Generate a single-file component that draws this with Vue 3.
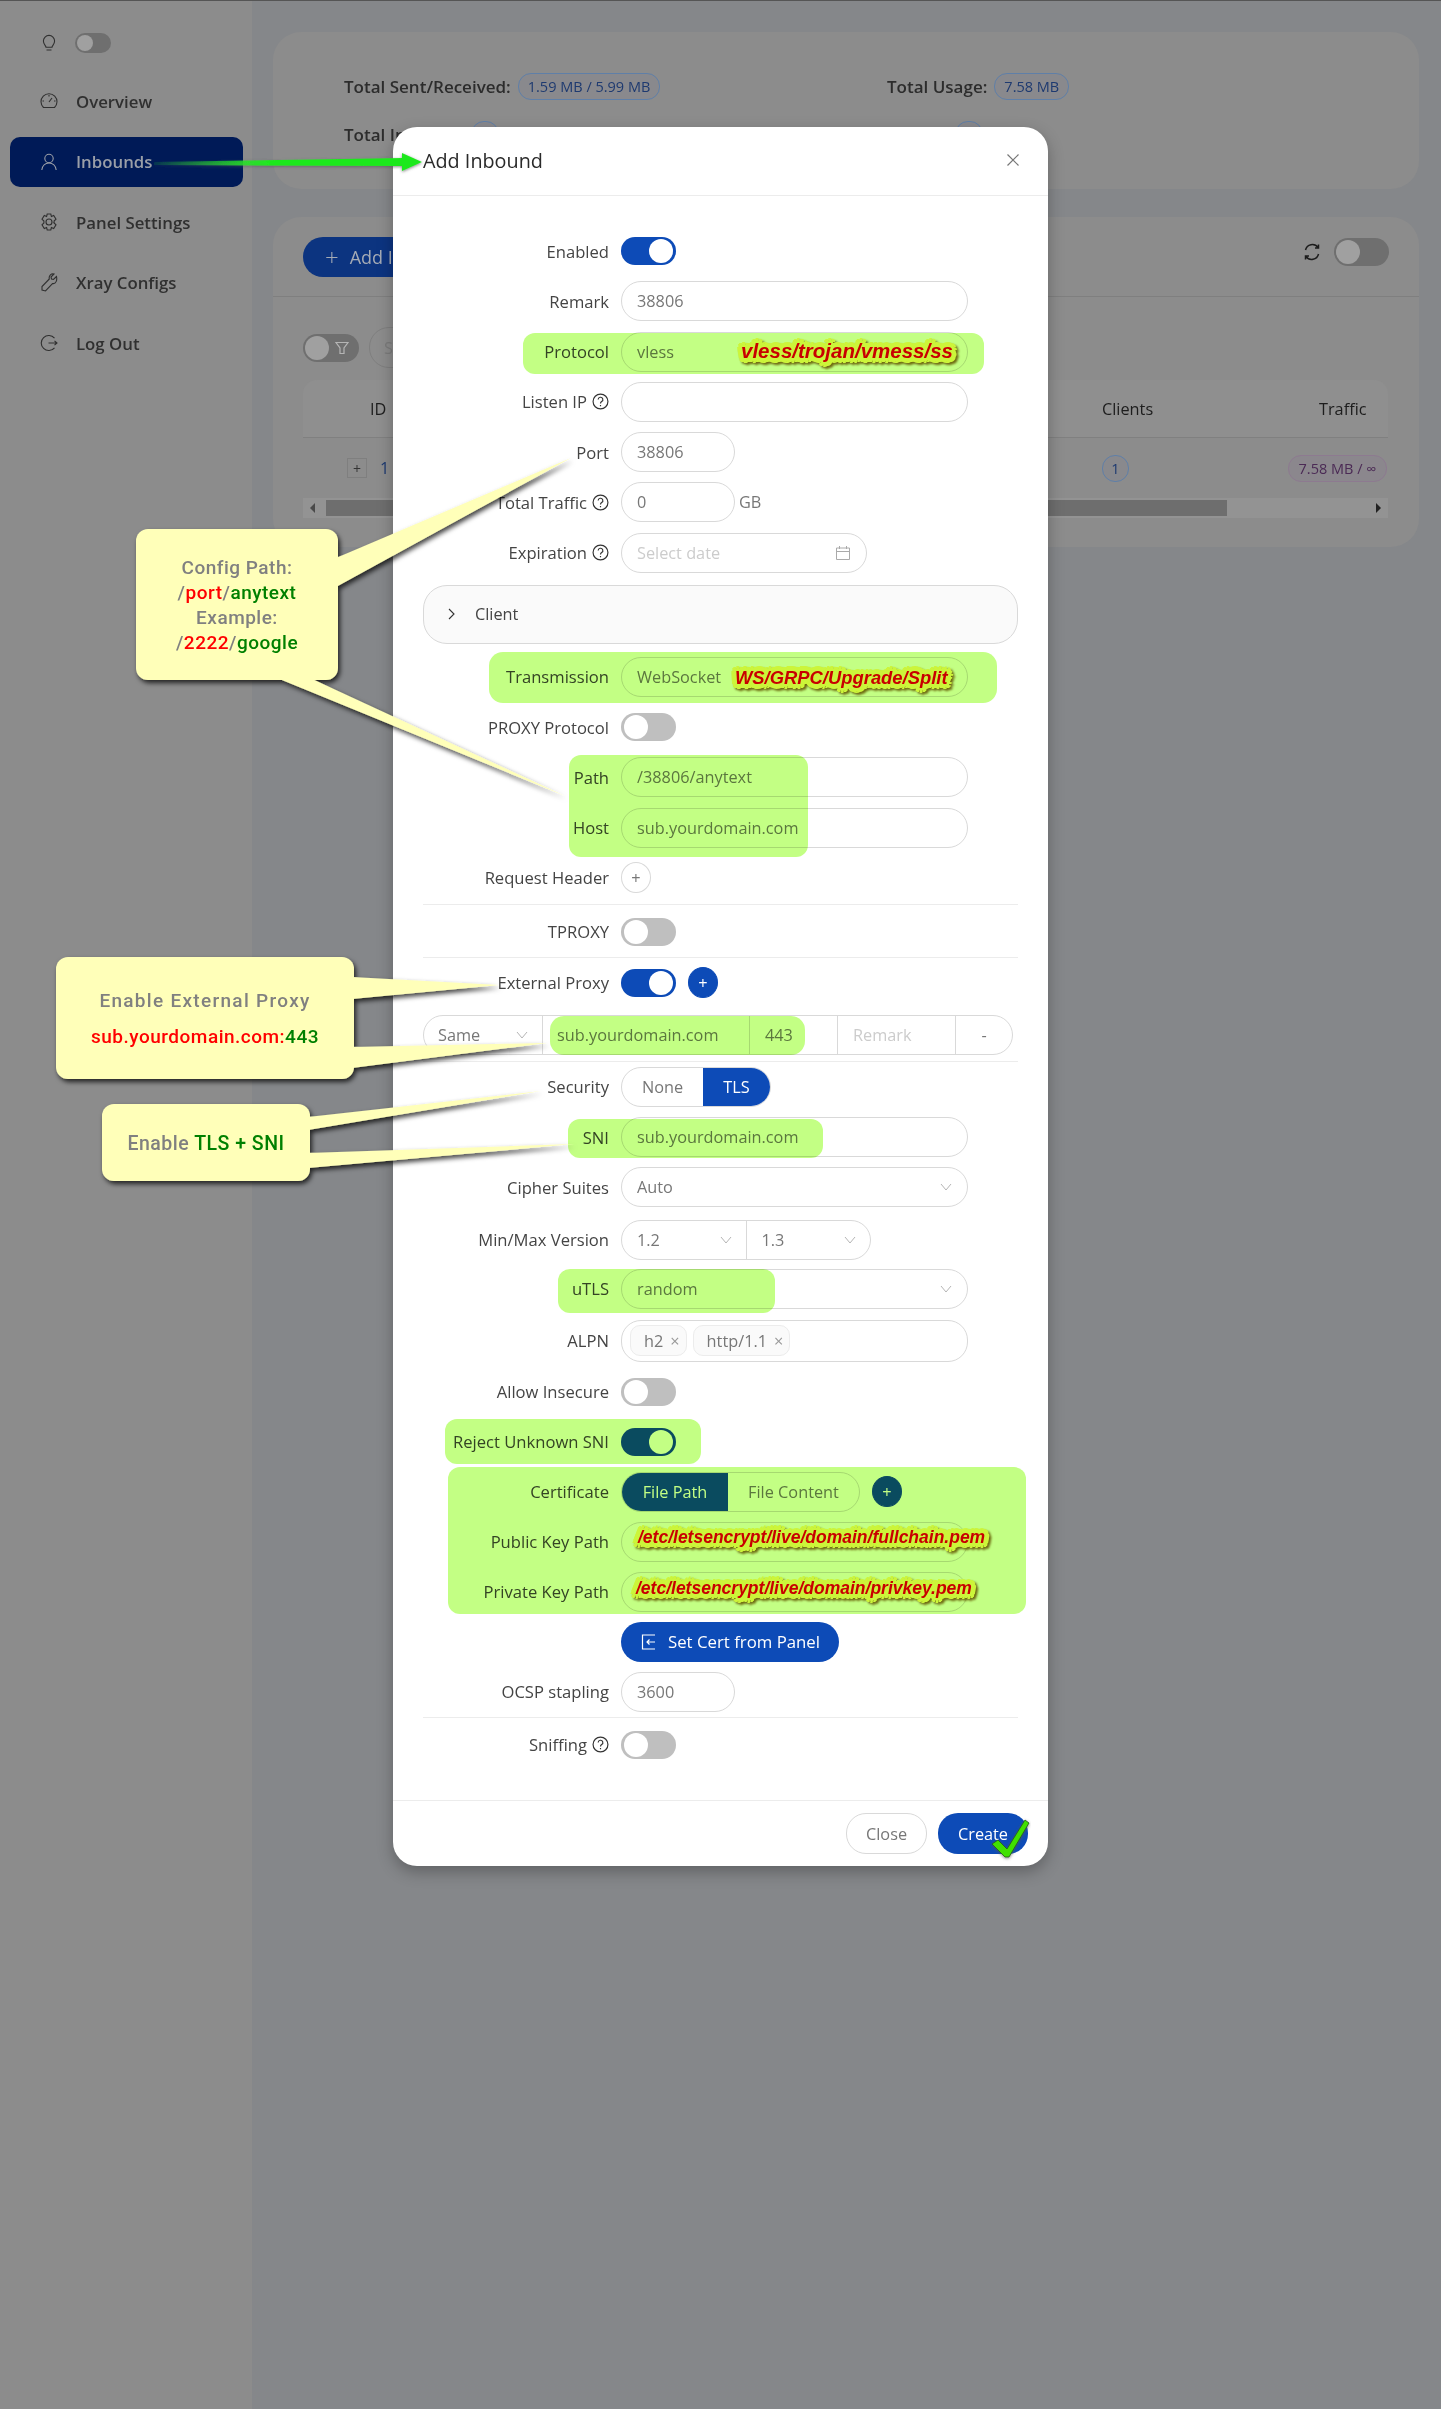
<script setup>
const navItems = [
  { key: "overview", label: "Overview" },
  { key: "inbounds", label: "Inbounds", active: true },
  { key: "settings", label: "Panel Settings" },
  { key: "xray", label: "Xray Configs" },
  { key: "logout", label: "Log Out" },
];

// green marker boxes painted on top of the form: [x, y, w, h, radius]
const marks = [
  [523, 332, 461, 41, 12],
  [489, 651, 508, 51, 14],
  [569, 754, 239, 102, 12],
  [550, 1015, 255, 39, 14],
  [568, 1118, 255, 39, 12],
  [558, 1268, 217, 44, 12],
  [445, 1418, 256, 45, 12],
  [448, 1466, 578, 147, 12],
];

const notes = [
  { text: "vless/trojan/vmess/ss", x: 741, y: 350, size: 20.5 },
  { text: "WS/GRPC/Upgrade/Split", x: 735, y: 677, size: 18.4 },
  { text: "/etc/letsencrypt/live/domain/fullchain.pem", x: 638, y: 1536, size: 17.5 },
  { text: "/etc/letsencrypt/live/domain/privkey.pem", x: 636, y: 1587, size: 17.5 },
];

function boxStyle(m) {
  return {
    left: m[0] + "px",
    top: m[1] + "px",
    width: m[2] + "px",
    height: m[3] + "px",
    borderRadius: m[4] + "px",
  };
}
</script>

<template>
  <div class="page">
    <aside class="side">
      <div class="themeRow">
        <svg class="navIcon" viewBox="0 0 20 20"><path d="M7 14.2c0-1.6-2.6-2.6-2.6-6.2a5.6 5.6 0 0 1 11.2 0c0 3.6-2.6 4.6-2.6 6.2zM7.5 17h5" /></svg>
        <span class="dimSwitch small"><i></i></span>
      </div>
      <nav class="nav">
        <a v-for="item in navItems" :key="item.key" class="navItem" :class="{ active: item.active }">
          <svg class="navIcon" viewBox="0 0 20 20">
            <template v-if="item.key === 'overview'">
              <path d="M4.5 16.5a8 8 0 1 1 11 0zM10 11l3-4M3.5 10h1.5M15 10h1.5M10 4v1.5" />
            </template>
            <template v-else-if="item.key === 'inbounds'">
              <circle cx="10" cy="6.5" r="4.2" /><path d="M2.8 18c.5-4 3.400-7 7.200-7s6.700 3 7.200 7" />
            </template>
            <template v-else-if="item.key === 'settings'">
              <circle cx="10" cy="10" r="3" /><path d="M8.200 2h3.600l.6 2.500 2.300-1 2.300 3.700-1.900 1.800.1 2-.1 0 1.900 1.800-2.300 3.700-2.300-1-.6 2.500H8.200l-.6-2.500-2.300 1-2.300-3.700L4.900 11V9L3 7.200l2.300-3.700 2.300 1z" />
            </template>
            <template v-else-if="item.key === 'xray'">
              <path d="M17.500 3.500l-3 3-2-.5-.5-2 3-3c-2.500-.8-5.500 1.500-4.700 5L3 13.500V17l3.500 1 7-7.500c3.500.8 4.800-3.500 4-7z" />
            </template>
            <template v-else>
              <path d="M15.500 5.200a7.500 7.500 0 1 0 0 9.600M9.500 10h8.500M15.500 7.800L18 10l-2.500 2.200" />
            </template>
          </svg>
          <span>{{ item.label }}</span>
        </a>
      </nav>
    </aside>

    <main class="main">
      <section class="card statsCard">
        <div class="stat"><b>Total Sent/Received:</b><span class="tag">1.59 MB / 5.99 MB</span></div>
        <div class="stat"><b>Total Usage:</b><span class="tag">7.58 MB</span></div>
        <div class="stat"><b>Total Inbound:</b><span class="tag">1</span></div>
        <div class="stat"><b>Clients:</b><span class="tag">1</span></div>
      </section>

      <section class="card listCard">
        <div class="listHead">
          <button class="addBtn"><span class="addPlus">+</span>Add Inbound</button>
          <div class="refresh">
            <svg width="20" height="20" viewBox="0 0 20 20" fill="none" stroke="#1c1c1c" stroke-width="1.5"><path d="M3.500 8a7 7 0 0 1 12.500-2.500M16.500 12a7 7 0 0 1-12.500 2.500M16.500 2.500v3.500H13M3.500 17.500V14H7" /></svg>
            <span class="dimSwitch"><i></i></span>
          </div>
        </div>
        <div class="listBody">
          <div class="filters">
            <span class="dimSwitch filterSwitch"><i></i>
              <svg width="16" height="16" viewBox="0 0 16 16" fill="none" stroke="#b5b5b5" stroke-width="1.200"><path d="M2 2.500h12l-4 5.500v5.500H6V8z" /></svg>
            </span>
            <span class="searchBox">S</span>
          </div>
          <div class="tableHead"><span></span><span>ID</span><span>Clients</span><span>Traffic</span></div>
          <div class="tableRow">
            <span></span><span class="expand">+</span><span class="rowId">1</span>
            <span class="tag round">1</span><span class="tag mauve">7.58 MB / ∞</span>
          </div>
          <div class="scrollbar">
            <span class="arrowL"></span><span class="thumb"></span><span class="arrowR"></span>
          </div>
        </div>
      </section>
    </main>

    <section class="modal">
      <header class="modalHead">
        <span>Add Inbound</span>
        <svg width="14" height="14" viewBox="0 0 14 14" stroke="#777" stroke-width="1.200"><path d="M1.500 1.500l11 11M12.500 1.500l-11 11" /></svg>
      </header>

      <div class="modalBody">
        <div class="row"><label>Enabled</label><span class="switch on"><i></i></span></div>
        <div class="row"><label>Remark</label><input class="in" value="38806" /></div>
        <div class="row"><label>Protocol</label><div class="in">vless</div></div>
        <div class="row">
          <label>Listen IP
            <svg class="help" viewBox="0 0 16 16"><circle cx="8" cy="8" r="7" /><path d="M5.800 6.200a2.200 2.200 0 1 1 3.300 1.900c-.8.500-1.100.9-1.100 1.800M8 11.200v1.300" /></svg>
          </label>
          <input class="in" />
        </div>
        <div class="row"><label>Port</label><input class="in short" value="38806" /></div>
        <div class="row">
          <label>Total Traffic
            <svg class="help" viewBox="0 0 16 16"><circle cx="8" cy="8" r="7" /><path d="M5.800 6.200a2.200 2.200 0 1 1 3.300 1.900c-.8.500-1.100.9-1.100 1.800M8 11.200v1.300" /></svg>
          </label>
          <div class="inline"><input class="in short" value="0" /><span class="unit">GB</span></div>
        </div>
        <div class="row">
          <label>Expiration
            <svg class="help" viewBox="0 0 16 16"><circle cx="8" cy="8" r="7" /><path d="M5.800 6.200a2.200 2.200 0 1 1 3.300 1.900c-.8.500-1.100.9-1.100 1.800M8 11.200v1.300" /></svg>
          </label>
          <div class="in date">
            <span class="ph">Select date</span>
            <svg width="16" height="16" viewBox="0 0 16 16" fill="none" stroke="#aaa"><path d="M1.500 3h13v11.500h-13zM1.500 6.500h13M4.500 1v3M11.500 1v3" /></svg>
          </div>
        </div>

        <div class="client">
          <svg width="10" height="14" viewBox="0 0 10 14" fill="none" stroke="#333" stroke-width="1.100"><path d="M2 2l5 5-5 5" /></svg>
          <span>Client</span>
        </div>

        <div class="row"><label>Transmission</label><div class="in">WebSocket</div></div>
        <div class="row"><label>PROXY Protocol</label><span class="switch"><i></i></span></div>
        <div class="row"><label>Path</label><input class="in" value="/38806/anytext" /></div>
        <div class="row"><label>Host</label><input class="in" value="sub.yourdomain.com" /></div>
        <div class="row last"><label>Request Header</label><button class="circle">+</button></div>
        <hr class="rule first" />
        <div class="row last"><label>TPROXY</label><span class="switch"><i></i></span></div>
        <hr class="rule" />
        <div class="row last"><label>External Proxy</label>
          <div class="inline gapped"><span class="switch on"><i></i></span><button class="circle blue">+</button></div>
        </div>
        <div class="proxyRow">
          <div class="seg same">Same
            <svg class="chev" viewBox="0 0 12 8"><path d="M1 1l5 6 5-6" /></svg>
          </div>
          <div class="seg host">sub.yourdomain.com</div>
          <div class="seg port">443</div>
          <div class="seg remark">Remark</div>
          <div class="seg minus">-</div>
        </div>
        <hr class="rule tight" />
        <div class="row"><label>Security</label>
          <div class="radio"><span class="opt none">None</span><span class="opt sel tls">TLS</span></div>
        </div>
        <div class="row"><label>SNI</label><input class="in" value="sub.yourdomain.com" /></div>
        <div class="row"><label>Cipher Suites</label>
          <div class="in pick">Auto<svg class="chev" viewBox="0 0 12 8"><path d="M1 1l5 6 5-6" /></svg></div>
        </div>
        <div class="row versions"><label>Min/Max Version</label>
          <div class="verPair">
            <div class="ver">1.2<svg class="chev" viewBox="0 0 12 8"><path d="M1 1l5 6 5-6" /></svg></div>
            <div class="ver">1.3<svg class="chev" viewBox="0 0 12 8"><path d="M1 1l5 6 5-6" /></svg></div>
          </div>
        </div>
        <div class="row"><label>uTLS</label>
          <div class="in pick">random<svg class="chev" viewBox="0 0 12 8"><path d="M1 1l5 6 5-6" /></svg></div>
        </div>
        <div class="row alpnRow"><label>ALPN</label>
          <div class="in alpn">
            <span class="chip">h2<em>×</em></span><span class="chip">http/1.1<em>×</em></span>
          </div>
        </div>
        <div class="row even"><label>Allow Insecure</label><span class="switch"><i></i></span></div>
        <div class="row even"><label>Reject Unknown SNI</label><span class="switch on"><i></i></span></div>
        <div class="row even"><label>Certificate</label>
          <div class="inline gapped">
            <div class="radio"><span class="opt sel path">File Path</span><span class="opt content">File Content</span></div>
            <button class="circle blue">+</button>
          </div>
        </div>
        <div class="row even"><label>Public Key Path</label><input class="in" /></div>
        <div class="row even"><label>Private Key Path</label><input class="in" /></div>
        <div class="row even"><label></label>
          <button class="primary cert">
            <svg width="18" height="18" viewBox="0 0 18 18" fill="none" stroke="#fff" stroke-width="1.200"><path d="M15 2H2.500v14H15M15 9H7M9.500 6.500L7 9l2.500 2.500" /></svg>
            Set Cert from Panel
          </button>
        </div>
        <div class="row last"><label>OCSP stapling</label><input class="in short" value="3600" /></div>
        <hr class="rule tail" />
        <div class="row">
          <label>Sniffing
            <svg class="help" viewBox="0 0 16 16"><circle cx="8" cy="8" r="7" /><path d="M5.800 6.200a2.200 2.200 0 1 1 3.300 1.900c-.8.500-1.100.9-1.100 1.800M8 11.200v1.300" /></svg>
          </label>
          <span class="switch"><i></i></span>
        </div>
      </div>

      <footer class="modalFoot">
        <button class="ghost">Close</button>
        <button class="primary create">Create</button>
      </footer>
    </section>

    <!-- annotations painted on the screenshot -->
    <div v-for="(m, i) in marks" :key="i" class="mark" :style="boxStyle(m)"></div>
    <span v-for="n in notes" :key="n.text" class="note" :style="{ left: n.x + 'px', top: n.y + 'px', fontSize: n.size + 'px' }">{{ n.text }}</span>

    <svg class="overlay" width="1441" height="2409" viewBox="0 0 1441 2409">
      <defs>
        <filter id="soft" x="-20%" y="-20%" width="140%" height="140%">
          <feDropShadow dx="2" dy="3" stdDeviation="2.500" flood-color="#000" flood-opacity=".75" />
        </filter>
        <filter id="arrowSoft" x="-5%" y="-100%" width="110%" height="300%">
          <feDropShadow dx="0" dy="1" stdDeviation="1.500" flood-color="#555" flood-opacity=".7" />
        </filter>
        <linearGradient id="arrowFill" x1="154" x2="270" y1="0" y2="0" gradientUnits="userSpaceOnUse">
          <stop offset="0" stop-color="#1ee81e" stop-opacity="0.100" />
          <stop offset="1" stop-color="#1ee81e" />
        </linearGradient>
      </defs>

      <g fill="#ffffb9" filter="url(#soft)">
        <rect x="136" y="528" width="202" height="151" rx="12" />
        <polygon points="336,557 571,457 336,586" />
        <polygon points="277,677 565,795 310,677" />
        <rect x="56" y="956" width="298" height="122" rx="12" />
        <polygon points="352,976 499,984 352,998" />
        <polygon points="352,1046 547,1042 352,1067" />
        <rect x="102" y="1103" width="208" height="77" rx="12" />
        <polygon points="308,1116 541,1090 308,1129" />
        <polygon points="308,1152 574,1143 308,1167" />
      </g>

      <path filter="url(#arrowSoft)" fill="url(#arrowFill)" d="M154 161 L402 157 V152 L422 161 L402 170 V165 L154 164 Z" />

      <path filter="url(#arrowSoft)" fill="#3fe000" stroke="#1f5c10" stroke-width=".8" d="M992 1843 L998 1839 L1007 1848 L1025 1819 L1029 1822 L1009 1856 L1005 1856 Z" />
    </svg>

    <div class="callText c1">
      <div>Config Path:</div>
      <div>/<span class="r">port</span>/<span class="g">anytext</span></div>
      <div>Example:</div>
      <div>/<span class="r">2222</span>/<span class="g">google</span></div>
    </div>
    <div class="callText c2">
      <div class="c2a">Enable External Proxy</div>
      <div class="c2b"><span class="r">sub.yourdomain.com:</span><span class="g">443</span></div>
    </div>
    <div class="callText c3">Enable <span class="g">TLS + SNI</span></div>
  </div>
</template>

<style>
body {
  margin: 0;
  background: #85878a;
}
</style>

<style scoped>
* {
  box-sizing: border-box;
}
.page {
  position: relative;
  display: flex;
  width: 1441px;
  height: 2409px;
  overflow: hidden;
  background: #85878a;
  border-top: 1px solid #555;
  font-family: "Open Sans", "Noto Sans", sans-serif;
  font-size: 16.300px;
  color: #444;
}

/* sidebar */
.side {
  width: 252px;
  flex: none;
  background: #8c8c8c;
  padding: 32px 9px 0 10px;
}
.themeRow {
  display: flex;
  align-items: center;
  gap: 16px;
  padding-left: 29px;
  height: 20px;
}
.navIcon {
  width: 20px;
  height: 20px;
  fill: none;
  stroke: #303030;
  stroke-width: 1.100;
  flex: none;
}
.nav {
  display: flex;
  flex-direction: column;
  margin-top: 23px;
}
.navItem {
  display: flex;
  align-items: center;
  gap: 17px;
  height: 50px;
  margin-bottom: 10.500px;
  padding-left: 29px;
  border-radius: 10px;
  font-weight: 600;
  font-size: 16.800px;
  color: #303030;
}
.navItem.active {
  background: #001a57;
  color: #9a9fa8;
}
.navItem.active .navIcon {
  stroke: #9a9fa8;
}
.dimSwitch {
  display: inline-flex;
  align-items: center;
  width: 55px;
  height: 28px;
  padding: 2px;
  border-radius: 14px;
  background: #6f6f6f;
}
.dimSwitch i {
  width: 24px;
  height: 24px;
  border-radius: 50%;
  background: #a0a0a0;
}
.dimSwitch.small {
  width: 36px;
  height: 20px;
}
.dimSwitch.small i {
  width: 16px;
  height: 16px;
}

/* page behind the modal */
.main {
  flex: 1;
  padding: 31px 22px 0 21px;
}
.card {
  background: #8c8c8c;
  border-radius: 28px;
}
.statsCard {
  display: grid;
  grid-template-columns: 543px 1fr;
  grid-auto-rows: 48px;
  height: 157px;
  padding: 30px 0 0 71px;
}
.stat {
  display: flex;
  align-items: center;
  gap: 7px;
}
.stat b {
  font-weight: 600;
  font-size: 17px;
  color: #2c2c2c;
}
.tag {
  display: inline-flex;
  align-items: center;
  justify-content: center;
  height: 27px;
  padding: 0 9px;
  border: 1px solid #5f7fa8;
  border-radius: 13px;
  background: #89898d;
  font-size: 14.500px;
  color: #1e3a70;
}
.listCard {
  height: 330px;
  margin-top: 28px;
}
.listHead {
  display: flex;
  align-items: center;
  justify-content: space-between;
  height: 80px;
  padding: 0 30px;
  border-bottom: 1px solid #7f7f7f;
}
.addBtn {
  display: flex;
  align-items: center;
  height: 40px;
  padding: 0 22px;
  border: none;
  border-radius: 20px;
  background: #0c3480;
  font: inherit;
  font-size: 18px;
  color: #a5abb5;
}
.addPlus {
  margin-right: 11px;
  font-size: 24px;
  font-weight: 300;
}
.refresh {
  display: flex;
  align-items: center;
  gap: 12px;
  margin-top: -10px;
}
.listBody {
  padding: 30px 31px 0 30px;
}
.filters {
  display: flex;
  align-items: center;
  gap: 10px;
  height: 41px;
}
.filterSwitch {
  width: 56px;
  gap: 5px;
}
.searchBox {
  display: flex;
  align-items: center;
  width: 120px;
  height: 41px;
  padding-left: 14px;
  border: 1px solid #7f7f7f;
  border-radius: 20px;
  color: #7b7b7b;
}
.tableHead {
  display: grid;
  grid-template-columns: 67px 732px 217px 1fr;
  align-items: center;
  height: 58px;
  margin-top: 12px;
  border-bottom: 1px solid #808080;
  background: #8f8f8f;
  border-radius: 14px 14px 0 0;
  color: #1d1d1d;
}
.tableRow {
  display: grid;
  grid-template-columns: 44px 33px 722px 186px 1fr;
  align-items: center;
  height: 60px;
}
.expand {
  display: flex;
  align-items: center;
  justify-content: center;
  width: 20px;
  height: 20px;
  border: 1px solid #7f7f7f;
  font-size: 14px;
  color: #333;
}
.rowId {
  color: #1e3a70;
}
.tag.round {
  width: 27px;
  padding: 0;
}
.tag.mauve {
  width: 99px;
  padding: 0;
  border-color: #8d7a90;
  background: #8b878d;
  color: #4b2a55;
}
.scrollbar {
  display: flex;
  align-items: center;
  height: 20px;
  background: #939393;
}
.thumb {
  width: 901px;
  height: 16px;
  margin-left: 11px;
  background: #6e6e6e;
}
.arrowL,
.arrowR {
  width: 0;
  height: 0;
  border-top: 5px solid transparent;
  border-bottom: 5px solid transparent;
}
.arrowL {
  margin-left: 7px;
  border-right: 5px solid #4a4a4a;
}
.arrowR {
  margin-left: auto;
  margin-right: 7px;
  border-left: 5px solid #222;
}

/* modal */
.modal {
  position: absolute;
  left: 393px;
  top: 126px;
  display: flex;
  flex-direction: column;
  width: 655px;
  height: 1739px;
  background: #fff;
  border-radius: 24px;
  box-shadow: 0 6px 16px rgba(0, 0, 0, 0.28);
}
.modalHead {
  display: flex;
  align-items: center;
  justify-content: space-between;
  height: 69px;
  padding: 0 28px 2px 30px;
  border-bottom: 1px solid #ececec;
  font-size: 19.800px;
  color: #2a2a2a;
}
.modalBody {
  display: flex;
  flex-direction: column;
  flex: 1;
  padding: 35px 30px 0;
}
.row {
  display: grid;
  flex: none;
  grid-template-columns: 198px 347px;
  align-items: center;
  height: 40px;
  margin-bottom: 10.250px;
}
.row.last {
  margin-bottom: 0;
}
.row.even {
  margin-bottom: 10px;
}
.row.versions {
  margin-top: 2px;
  margin-bottom: 9px;
}
.row.alpnRow {
  height: 42px;
  margin-top: 1px;
  margin-bottom: 10px;
}
.row label {
  display: flex;
  align-items: center;
  justify-content: flex-end;
  gap: 5px;
  padding-right: 12px;
  font-size: 16.600px;
  white-space: nowrap;
}
.help {
  width: 17px;
  height: 17px;
  fill: none;
  stroke: #333;
  stroke-width: 1.100;
}
.in {
  display: flex;
  align-items: center;
  width: 100%;
  height: 40px;
  padding: 0 15px;
  border: 1px solid #d9d9d9;
  border-radius: 20px;
  outline: none;
  background: transparent;
  font: inherit;
  color: #777;
}
.in.short {
  width: 114px;
}
.in.date {
  justify-content: space-between;
  width: 246px;
}
.in.pick {
  justify-content: space-between;
}
.ph {
  color: #ccc;
}
.inline {
  display: flex;
  align-items: center;
  gap: 4px;
}
.inline.gapped {
  gap: 12px;
}
.unit {
  color: #777;
}
.client {
  display: flex;
  flex: none;
  align-items: center;
  gap: 18px;
  height: 59px;
  margin: 2px 0 13px;
  padding-left: 23px;
  border: 1px solid #d9d9d9;
  border-radius: 24px;
  background: #fafafa;
}
.rule {
  flex: none;
  width: 100%;
  height: 1px;
  margin: 5px 0;
  border: none;
  background: #ececec;
}
.rule.first {
  margin: 6px 0 7px;
}
.rule.tight {
  margin: 6px 0 5px;
}
.rule.tail {
  margin: 5px 0 7px;
}
.switch {
  display: inline-flex;
  align-items: center;
  justify-self: start;
  width: 55px;
  height: 28px;
  padding: 2px 3px;
  border-radius: 14px;
  background: #bfbfbf;
}
.switch i {
  width: 24px;
  height: 24px;
  border-radius: 50%;
  background: #fff;
}
.switch.on {
  justify-content: flex-end;
  background: #0d4bb7;
}
.circle {
  width: 30px;
  height: 31px;
  padding: 0;
  border: 1px solid #d9d9d9;
  border-radius: 50%;
  background: #fff;
  font: inherit;
  color: #777;
}
.circle.blue {
  border-color: #0d4bb7;
  background: #0d4bb7;
  color: #fff;
}
.proxyRow {
  display: flex;
  flex: none;
  width: 590px;
  height: 40px;
  margin-top: 12px;
  border: 1px solid #d9d9d9;
  border-radius: 20px;
}
.seg {
  display: flex;
  align-items: center;
  border-right: 1px solid #d9d9d9;
  color: #777;
}
.seg.same {
  justify-content: space-between;
  width: 119px;
  padding: 0 14px;
}
.seg.host {
  width: 207px;
  padding-left: 14px;
}
.seg.port {
  width: 88px;
  padding-left: 15px;
}
.seg.remark {
  width: 118px;
  padding-left: 15px;
  color: #ccc;
}
.seg.minus {
  flex: 1;
  justify-content: center;
  border-right: none;
}
.chev {
  width: 12px;
  height: 8px;
  fill: none;
  stroke: #b5b5b5;
}
.radio {
  display: inline-flex;
  justify-self: start;
  height: 40px;
  border: 1px solid #d9d9d9;
  border-radius: 20px;
  overflow: hidden;
}
.opt {
  display: flex;
  align-items: center;
  justify-content: center;
  color: #777;
}
.opt.sel {
  background: #0d4bb7;
  color: #fff;
}
.opt.none {
  width: 81px;
}
.opt.tls {
  width: 67px;
}
.opt.path {
  width: 106px;
}
.opt.content {
  width: 131px;
}
.verPair {
  display: flex;
  width: 250px;
  height: 40px;
  border: 1px solid #d9d9d9;
  border-radius: 20px;
}
.ver {
  display: flex;
  flex: 1;
  align-items: center;
  justify-content: space-between;
  padding: 0 14px 0 15px;
  color: #777;
}
.ver + .ver {
  border-left: 1px solid #d9d9d9;
}
.in.alpn {
  justify-content: flex-start;
  gap: 6px;
  height: 42px;
  padding: 0 8px;
}
.chip {
  display: flex;
  align-items: center;
  justify-content: space-between;
  gap: 7px;
  height: 31px;
  padding: 0 6px 0 13px;
  border: 1px solid #ececec;
  border-radius: 10px;
  background: #fafafa;
}
.chip em {
  font-style: normal;
  color: #999;
}
.primary {
  display: flex;
  align-items: center;
  justify-content: center;
  border: none;
  border-radius: 20px;
  background: #0d4bb7;
  font: inherit;
  color: #fff;
}
.cert {
  gap: 10px;
  width: 218px;
  height: 40px;
  font-size: 16.800px;
}
.modalFoot {
  display: flex;
  justify-content: flex-end;
  gap: 11px;
  height: 66px;
  padding: 12px 20px 0;
  border-top: 1px solid #ececec;
}
.ghost {
  width: 81px;
  height: 41px;
  border: 1px solid #d9d9d9;
  border-radius: 20px;
  background: #fff;
  font: inherit;
  color: #777;
}
.create {
  width: 90px;
  height: 41px;
}

/* annotations */
.mark {
  position: absolute;
  background: #c3ff84;
  mix-blend-mode: multiply;
}
.note {
  position: absolute;
  transform: translateY(-50%);
  font-family: "Liberation Sans", Arial, sans-serif;
  font-style: italic;
  font-weight: bold;
  white-space: nowrap;
  color: #c80000;
  filter: drop-shadow(2px 2px 1px #6e6a10);
  text-shadow:
    1px 0 0 #ccf53a,
    -1px 0 0 #ccf53a,
    0 1px 0 #ccf53a,
    0 -1px 0 #ccf53a,
    3px 0 0 #ccf53a,
    -3px 0 0 #ccf53a,
    0 3px 0 #ccf53a,
    0 -3px 0 #ccf53a,
    2px 2px 0 #ccf53a,
    -2px 2px 0 #ccf53a,
    2px -2px 0 #ccf53a,
    -2px -2px 0 #ccf53a,
    5px 0 0 #ccf53a,
    -5px 0 0 #ccf53a,
    0 5px 0 #ccf53a,
    0 -5px 0 #ccf53a,
    4px 3px 0 #ccf53a,
    -4px 3px 0 #ccf53a,
    4px -3px 0 #ccf53a,
    -4px -3px 0 #ccf53a,
    3px 4px 0 #ccf53a,
    -3px 4px 0 #ccf53a,
    3px -4px 0 #ccf53a,
    -3px -4px 0 #ccf53a;
}
.overlay {
  position: absolute;
  left: 0;
  top: 0;
  pointer-events: none;
}
.callText {
  position: absolute;
  font-family: Roboto, sans-serif;
  font-weight: 500;
  letter-spacing: 0.500px;
  text-align: center;
  white-space: nowrap;
  color: #808080;
}
.c1 {
  left: 136px;
  top: 554px;
  width: 202px;
  font-size: 19px;
  line-height: 25px;
}
.c2 {
  left: 56px;
  top: 988px;
  width: 298px;
  font-size: 19px;
  line-height: 24px;
}
.c2a {
  letter-spacing: 1.300px;
}
.c2b {
  margin-top: 12px;
}
.c3 {
  left: 102px;
  top: 1131px;
  width: 208px;
  font-size: 19.500px;
  line-height: 24px;
}
.r {
  color: #ff0000;
}
.g {
  color: #008000;
}
</style>
